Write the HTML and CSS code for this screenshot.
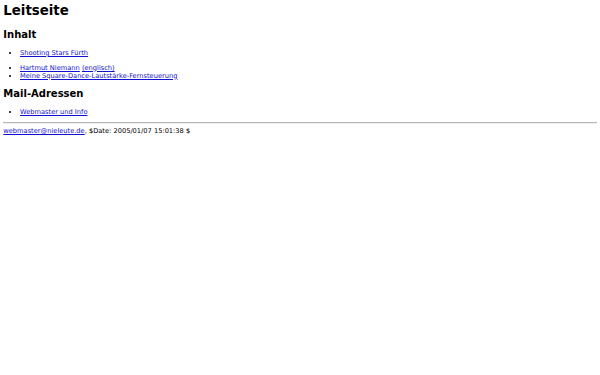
FILE: index.html
```html
<!DOCTYPE html>
<html lang="de">
<head>
<meta charset="utf-8">
<title>Leitseite</title>
<link rel="stylesheet" href="styles.css">
</head>
<body>
<h1 class="title">Leitseite</h1>
<h2 class="section">Inhalt</h2>
<ul class="links">
<li><a href="#">Shooting Stars Fürth</a></li>
</ul>
<ul class="links">
<li><a href="#">Hartmut Niemann</a> <a href="#">(englisch)</a></li>
<li><a href="#">Meine Square-Dance-Lautstärke-Fernsteuerung</a></li>
</ul>
<h2 class="section">Mail-Adressen</h2>
<ul class="links">
<li><a href="#">Webmaster und Info</a></li>
</ul>
<hr class="rule">
<div class="footer"><a href="#">webmaster@nieleute.de</a>, $Date: 2005/01/07 15:01:38 $</div>
</body>
</html>
```
FILE: styles.css
```css
html { background: #fff; }
body {
  margin: 3.33px;
  font-family: "DejaVu Sans", sans-serif;
  font-size: 6.67px;
  color: #000;
}
a { color: #1010d0; }
.title {
  font-size: 13.33px;
  margin: 0 0 10.9px;
}
.section {
  font-size: 10px;
  margin: 8.67px 0 7.3px;
}
.links {
  margin: 8.67px 0 6px;
  padding-left: 16.67px;
}
.links + .links { margin-top: 6.67px; }
.rule {
  margin: 6px 0 3px;
  border: 0;
  border-top: 1px solid #b8b8b8;
  border-bottom: 1px solid #ededed;
}
.footer { margin: 0; }
```
